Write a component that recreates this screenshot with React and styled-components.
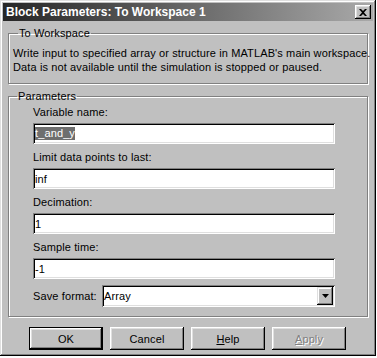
import React from 'react'
import styled, { createGlobalStyle } from 'styled-components'

const Global = createGlobalStyle`
  body {
    margin: 0;
    padding: 0;
    background: #fff;
    overflow: hidden;
    font-family: "Liberation Sans", Arial, sans-serif;
    font-size: 11px;
    color: #000;
  }
`

const Window = styled.div`
  width: 376px;
  height: 356px;
  box-sizing: border-box;
  padding: 3px;
  background: #c0c0c0;
  box-shadow: inset -1px -1px #000, inset 1px 1px #dfdfdf,
    inset -2px -2px #808080, inset 2px 2px #fff;
  display: flex;
  flex-direction: column;
`

const TitleBar = styled.div`
  height: 18px;
  display: flex;
  align-items: center;
  justify-content: space-between;
  padding-left: 3px;
  background: linear-gradient(to right, #262626, #a9a9a9);
  color: #fff;
  font-weight: bold;
  font-size: 12px;
`

const CloseButton = styled.div`
  width: 16px;
  height: 14px;
  margin-right: 2px;
  box-sizing: border-box;
  background: #c0c0c0;
  box-shadow: inset -1px -1px #000, inset 1px 1px #fff,
    inset -2px -2px #808080, inset 2px 2px #dfdfdf;
  display: flex;
  align-items: center;
  justify-content: center;
`

const Body = styled.div`
  padding: 5px 5px 0;
  display: flex;
  flex-direction: column;
  letter-spacing: 0.12px;
  white-space: nowrap;
`

const Group = styled.fieldset`
  margin: 0 0 ${({ gap }) => gap || 0}px;
  padding: ${({ pad }) => pad};
  border: 1px solid #808080;
  box-shadow: 1px 1px 0 #fff, inset 1px 1px 0 #fff;
  min-width: 0;
`

const Legend = styled.legend`
  padding: 0 1px;
  margin-left: ${({ offset }) => offset}px;
  line-height: 14px;
`

const Text = styled.div`
  line-height: 14px;
`

const Label = styled.div`
  line-height: 14px;
  margin-bottom: 4px;
`

const Field = styled.div`
  width: ${({ w }) => w}px;
  height: ${({ h }) => h || 21}px;
  box-sizing: border-box;
  background: #fff;
  box-shadow: inset 1px 1px #808080, inset -1px -1px #fff,
    inset 2px 2px #000, inset -2px -2px #dfdfdf;
  padding: 0 2px 0 2px;
  margin-bottom: ${({ mb }) => mb || 0}px;
  display: flex;
  align-items: center;
  line-height: 14px;
`

const Selected = styled.span`
  background: #6e6e6e;
  color: #fff;
  line-height: 13px;
`

const SelectRow = styled.div`
  display: flex;
  align-items: center;
`

const SelectLabel = styled.div`
  width: 69px;
  line-height: 14px;
`

const Arrow = styled.div`
  margin-left: auto;
  width: 16px;
  height: 18px;
  box-sizing: border-box;
  background: #c0c0c0;
  box-shadow: inset -1px -1px #000, inset 1px 1px #dfdfdf,
    inset -2px -2px #808080, inset 2px 2px #fff;
  display: flex;
  align-items: center;
  justify-content: center;
`

const ButtonRow = styled.div`
  display: flex;
  gap: 7px;
  padding: 10px 0 0 21px;
`

const Button = styled.div`
  width: 74px;
  height: 23px;
  box-sizing: border-box;
  display: flex;
  align-items: center;
  justify-content: center;
  background: #c0c0c0;
  border: ${({ primary }) => (primary ? '1px solid #000' : 'none')};
  box-shadow: inset -1px -1px #000, inset 1px 1px #fff,
    inset -2px -2px #808080, inset 2px 2px #dfdfdf;
  color: ${({ disabled }) => (disabled ? '#808080' : '#000')};
  text-shadow: ${({ disabled }) => (disabled ? '1px 1px 0 #fff' : 'none')};
  u {
    text-decoration: underline;
  }
`

const rows = [
  { label: 'Variable name:', value: 't_and_y', selected: true },
  { label: 'Limit data points to last:', value: 'inf' },
  { label: 'Decimation:', value: '1' },
  { label: 'Sample time:', value: '-1' },
]

export default function App() {
  return (
    <>
      <Global />
      <Window>
        <TitleBar>
          <span>Block Parameters: To Workspace 1</span>
          <CloseButton>
            <svg width="8" height="7" viewBox="0 0 8 7">
              <path d="M0 0h2l2 2 2-2h2L5 3.5 8 7H6L4 5 2 7H0l3-3.5z" fill="#000" />
            </svg>
          </CloseButton>
        </TitleBar>
        <Body>
          <Group gap={5} pad="6px 4px 9px 4px">
            <Legend offset={5}>To Workspace</Legend>
            <Text>Write input to specified array or structure in MATLAB's main workspace.</Text>
            <Text>Data is not available until the simulation is stopped or paused.</Text>
          </Group>
          <Group pad="2px 24px 9px 24px">
            <Legend offset={-16}>Parameters</Legend>
            {rows.map((r) => (
              <div key={r.label}>
                <Label>{r.label}</Label>
                <Field w={302} mb={6}>
                  {r.selected ? <Selected>{r.value}</Selected> : r.value}
                </Field>
              </div>
            ))}
            <SelectRow>
              <SelectLabel>Save format:</SelectLabel>
              <Field w={233} h={22}>
                Array
                <Arrow>
                  <svg width="7" height="4" viewBox="0 0 7 4">
                    <path d="M0 0h7L3.5 4z" fill="#000" />
                  </svg>
                </Arrow>
              </Field>
            </SelectRow>
          </Group>
          <ButtonRow>
            <Button primary>OK</Button>
            <Button>Cancel</Button>
            <Button>
              <span><u>H</u>elp</span>
            </Button>
            <Button disabled>
              <span><u>A</u>pply</span>
            </Button>
          </ButtonRow>
        </Body>
      </Window>
    </>
  )
}
